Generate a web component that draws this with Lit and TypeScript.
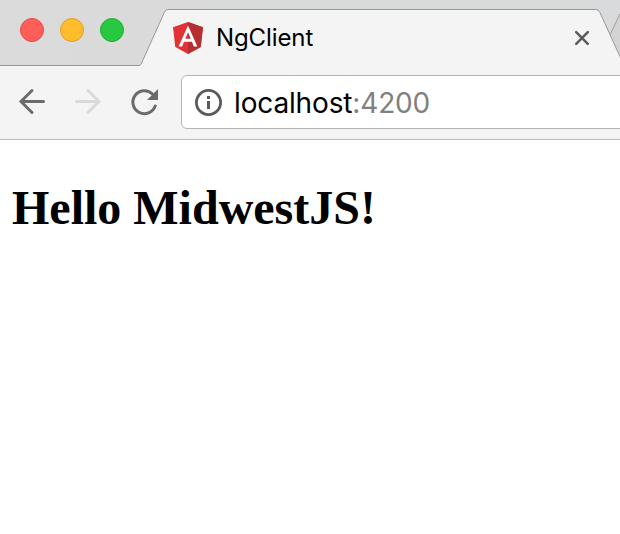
import { LitElement, html, css } from "lit";
import { customElement } from "lit/decorators.js";

@customElement("browser-tabs")
class BrowserTabs extends LitElement {
  static styles = css`
    :host { display: block; position: relative; height: 66px; overflow: hidden;
      background: linear-gradient(100deg, #dbdbdb 0, #dadada 160px, #d8dadb 620px); }
    .shape { position: absolute; inset: 0; display: block; }
    .row { position: relative; display: flex; align-items: center; height: 66px; }
    .lights { display: flex; gap: 16px; padding-left: 20px; margin-bottom: 6px; }
    .light { box-sizing: border-box; width: 24px; height: 24px; border-radius: 50%; border: 1px solid; }
    .red { background: #ff5f58; border-color: #e5483f; }
    .yellow { background: #ffbd2e; border-color: #dfa023; }
    .green { background: #28c940; border-color: #1dad2b; }
    .logo { display: block; margin: 10px 0 0 49px; }
    .title { margin: 9px 0 0 13px; width: 342px; font: 24px/30px Inter, sans-serif; color: #000; letter-spacing: -0.1px; }
    .close { display: block; margin: 10px 0 0 16px; }
  `;
  render() {
    return html`
      <svg class="shape" width="620" height="66" viewBox="0 0 620 66">
        <path d="M608 66V40L620 13V66Z" fill="#d4d4d4"/>
        <path d="M610 35L620 13.5" fill="none" stroke="#a2a2a2"/>
        <path d="M0 66V65.5H139Q140.5 65.5 141.3 63.7L164.3 12.5Q165.7 9.5 168 9.5H596Q598.5 9.5 599.8 12.3L624 65.5V67H0Z" fill="#f4f4f4"/>
        <path d="M0 65.5H139Q140.5 65.5 141.3 63.7L164.3 12.5Q165.7 9.5 168 9.5H596Q598.5 9.5 599.8 12.3L624 65.5" fill="none" stroke="#999"/>
      </svg>
      <div class="row">
        <div class="lights">
          <span class="light red"></span><span class="light yellow"></span><span class="light green"></span>
        </div>
        <svg class="logo" width="30" height="32" viewBox="31.9 30 186.2 200" preserveAspectRatio="none">
          <path fill="#e23237" d="M125 30L31.9 63.2l14.2 123.1L125 230l78.9-43.7 14.2-123.1z"/>
          <path fill="#b52e31" d="M125 30v200l78.9-43.7 14.2-123.1z"/>
          <path fill="#fff" d="M125 52.1L66.8 182.6h21.7l11.7-29.2h49.4l11.7 29.2H183L125 52.1zm17 83.3h-34l17-40.9z"/>
        </svg>
        <span class="title">NgClient</span>
        <svg class="close" width="16" height="16" viewBox="0 0 16 16">
          <path d="M2.2 2.2L13.8 13.8M13.8 2.2L2.2 13.8" stroke="#5a5a5a" stroke-width="2.5" stroke-linecap="round"/>
        </svg>
      </div>`;
  }
}

@customElement("browser-toolbar")
class BrowserToolbar extends LitElement {
  static styles = css`
    :host { display: flex; box-sizing: border-box; height: 74px; padding: 9px 0 0 16px;
      background: #f4f4f4; border-bottom: 1px solid #bababa; overflow: hidden; }
    .icon { flex: none; display: block; width: 32px; height: 32px; margin: 11px 24px 0 0; fill: none;
      stroke: #6b6b6b; stroke-width: 3; stroke-linecap: round; }
    .disabled { stroke: #dadada; }
    .reload { margin-right: 21px; }
    .address { box-sizing: border-box; flex: none; display: flex; align-items: center; width: 450px; height: 54px;
      padding-left: 13px; background: #fff; border: 1px solid #b5b5b5; border-radius: 6px; }
    .info { flex: none; display: block; margin-top: 2px; }
    .url { margin: 2px 0 0 11px; font: 28px/36px Inter, sans-serif; color: #000; letter-spacing: -0.15px; }
    .port { color: #808080; }
  `;
  render() {
    return html`
      <svg class="icon" viewBox="0 0 32 32"><path d="M27.5 15.5H5M16 4.5L5 15.5L16 26.5"/></svg>
      <svg class="icon disabled" viewBox="0 0 32 32"><path d="M4.5 15.5H27M16 4.5L27 15.5L16 26.5"/></svg>
      <svg class="icon reload" viewBox="0 0 32 32">
        <path d="M27.2 20A11.5 11.5 0 1 1 24.5 8"/>
        <path d="M30 3V14H19Z" fill="#6b6b6b" stroke="none"/>
      </svg>
      <div class="address">
        <svg class="info" width="28" height="28" viewBox="0 0 28 28">
          <circle cx="13.5" cy="13.5" r="12.1" fill="none" stroke="#5a5a5a" stroke-width="2.8"/>
          <path d="M12 7h3v3h-3zM12 12h3v8h-3z" fill="#5a5a5a"/>
        </svg>
        <span class="url">localhost<span class="port">:4200</span></span>
      </div>`;
  }
}

@customElement("app-root")
class AppRoot extends LitElement {
  static styles = css`
    :host { display: block; height: 534px; overflow: hidden; background: #fff; }
    .page { padding: 40px 12px; }
    .heading { margin: 0; font: bold 48px/56px "Liberation Serif", "Times New Roman", serif; color: #000; white-space: nowrap; }
  `;
  render() {
    return html`
      <browser-tabs></browser-tabs>
      <browser-toolbar></browser-toolbar>
      <main class="page"><h1 class="heading">Hello MidwestJS!</h1></main>`;
  }
}
